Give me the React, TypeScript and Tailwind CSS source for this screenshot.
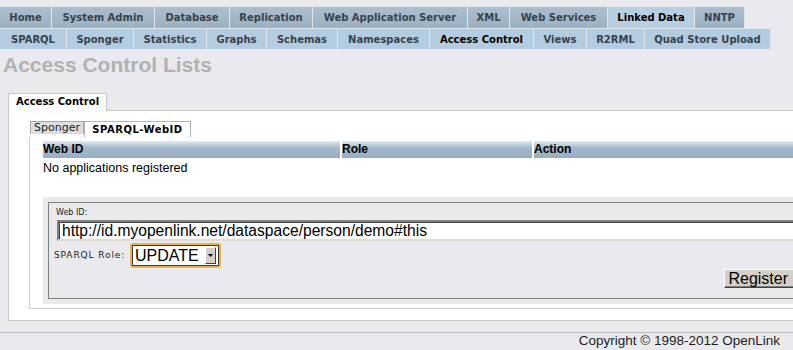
import clsx from "clsx";

const VERDANA = "font-['DejaVu_Sans',Verdana,sans-serif]";
const ARIAL = "font-['Liberation_Sans',Arial,Helvetica,sans-serif]";

type Tab = { label: string; width: string; active?: boolean };

const MAIN_TABS: Tab[] = [
  { label: "Home", width: "w-[52px]" },
  { label: "System Admin", width: "w-[103px]" },
  { label: "Database", width: "w-[75px]" },
  { label: "Replication", width: "w-[83px]" },
  { label: "Web Application Server", width: "w-[155px]" },
  { label: "XML", width: "w-[42px]" },
  { label: "Web Services", width: "w-[98px]" },
  { label: "Linked Data", width: "w-[87px]", active: true },
  { label: "NNTP", width: "w-[50px]" },
];

const SUB_TABS: Tab[] = [
  { label: "SPARQL", width: "w-[67px]" },
  { label: "Sponger", width: "w-[67px]" },
  { label: "Statistics", width: "w-[73px]" },
  { label: "Graphs", width: "w-[60px]" },
  { label: "Schemas", width: "w-[71px]" },
  { label: "Namespaces", width: "w-[92px]" },
  { label: "Access Control", width: "w-[104px]", active: true },
  { label: "Views", width: "w-[53px]" },
  { label: "R2RML", width: "w-[58px]" },
  { label: "Quad Store Upload", width: "w-[126px]" },
];

function NavTab({ tab, top }: { tab: Tab; top?: boolean }) {
  return (
    <div
      className={clsx(
        tab.width,
        VERDANA,
        "flex items-center justify-center border-t border-r border-[#dfe6ec] text-[10px] font-bold whitespace-nowrap",
        top
          ? tab.active
            ? "bg-[#b8cee1]"
            : "bg-linear-to-b from-[#abbecd] to-[#9cb1c2]"
          : "bg-[#b3cce0]",
        tab.active ? "text-black" : "text-[#36434d]"
      )}
    >
      {tab.label}
    </div>
  );
}

function RoleSelect() {
  return (
    <div className="h-[25px] w-[91px] rounded-[3px] border-2 border-[#e8b24e] flex">
      <div className="flex-1 flex items-center border border-[#3a3a3a] bg-white pr-[2px]">
        <span className={`${ARIAL} flex-1 pl-[2px] text-[16px] leading-[19px] text-black`}>UPDATE</span>
        <span className="h-[17px] w-[11px] flex items-center justify-center bg-[#d4d0c8] border border-t-white border-l-white border-b-[#404040] border-r-[#404040]">
          <svg width="5" height="3" viewBox="0 0 5 3">
            <path d="M0 0h5L2.5 3z" fill="#000" />
          </svg>
        </span>
      </div>
    </div>
  );
}

export default function App() {
  return (
    <div className="w-[793px] h-[350px] overflow-hidden bg-[#e9e9ee] text-black">
      <div className="pt-[6px]">
        <div className="flex h-[22px]">
          {MAIN_TABS.map((t) => (
            <NavTab key={t.label} tab={t} top />
          ))}
        </div>
        <div className="flex h-[21px]">
          {SUB_TABS.map((t) => (
            <NavTab key={t.label} tab={t} />
          ))}
        </div>
      </div>

      <h1 className={`${ARIAL} ml-[3px] mt-[4px] text-[21px] leading-[24px] font-bold text-[#b2b2b2]`}>
        Access Control Lists
      </h1>

      <div className="w-[810px] ml-[8px] mt-[16px]">
        <div className="flex">
          <div className={`${VERDANA} -mb-px h-[18px] border border-b-0 border-[#c8c8c8] bg-white px-[7px] text-[10px] leading-[16px] font-bold`}>
            Access Control
          </div>
        </div>

        <div className="border border-[#c8c8c8] bg-white pt-[10px] pl-[20px] pb-[11px]">
          <div className="flex items-start h-[16px]">
            <div className={`${VERDANA} ml-px w-[54px] h-[13px] border border-b-0 border-[#a8a8a8] bg-[#dedede] text-center text-[11px] leading-[12px] text-[#222]`}>
              Sponger
            </div>
            <div className={`${VERDANA} w-[107px] h-[16px] border border-b-0 border-[#b4b4b4] bg-white text-center text-[10px] tracking-[0.5px] leading-[15px] font-bold`}>
              SPARQL-WebID
            </div>
          </div>

          <div className="border-l border-b border-[#cccccc] pl-[13px] pt-[4px] pb-[4px]">
            <div className={`${ARIAL} grid grid-cols-[297px_190px_1fr] gap-x-[2px] text-[12px] font-bold leading-[17px]`}>
              {["Web ID", "Role", "Action"].map((h) => (
                <div key={h} className="h-[17px] bg-linear-to-b from-[#e3eaf0] via-[#a5b9ca] via-40% to-[#98adc1]">
                  {h}
                </div>
              ))}
            </div>
            <div className={`${ARIAL} h-[39px] pt-[2px] text-[12.5px] leading-[16px]`}>No applications registered</div>

            <div className="bg-[#e9e9ee] p-[5px]">
              <div className="border border-[#808080] pl-[5px] pb-[10px]">
                <div className={`${VERDANA} h-[17px] pl-[2px] pt-[4px] text-[8px] leading-[11px] text-[#222]`}>Web ID:</div>
                <div className={`${ARIAL} ml-[3px] h-[21px] border-2 border-t-[#808080] border-l-[#808080] border-b-[#e0ddd6] border-r-[#e0ddd6] bg-white pl-[3px] text-[15.6px] leading-[17px] shadow-[inset_1px_1px_0_#404040] whitespace-nowrap`}>
                  http://id.myopenlink.net/dataspace/person/demo#this
                </div>
                <div className="mt-[2px] flex items-center">
                  <span className={`${VERDANA} w-[76px] text-[9px] tracking-[0.9px] text-[#222]`}>SPARQL Role:</span>
                  <RoleSelect />
                </div>
                <div className="mt-px flex justify-end pr-[10px]">
                  <button className={`${ARIAL} h-[19px] border border-t-white border-l-white border-b-[#404040] border-r-[#404040] bg-[#d4d0c8] pl-[3px] pr-[12px] text-left text-[16px] leading-[17px] shadow-[inset_-1px_-1px_0_#808080]`}>
                    Register
                  </button>
                </div>
              </div>
            </div>
          </div>
        </div>
      </div>

      <footer className={`${ARIAL} mt-[11px] w-[793px] border-t border-[#bdbdbd] pr-[13px] text-right text-[13.5px] leading-[16px] text-[#1e1e1e]`}>
        Copyright © 1998-2012 OpenLink
      </footer>
    </div>
  );
}
